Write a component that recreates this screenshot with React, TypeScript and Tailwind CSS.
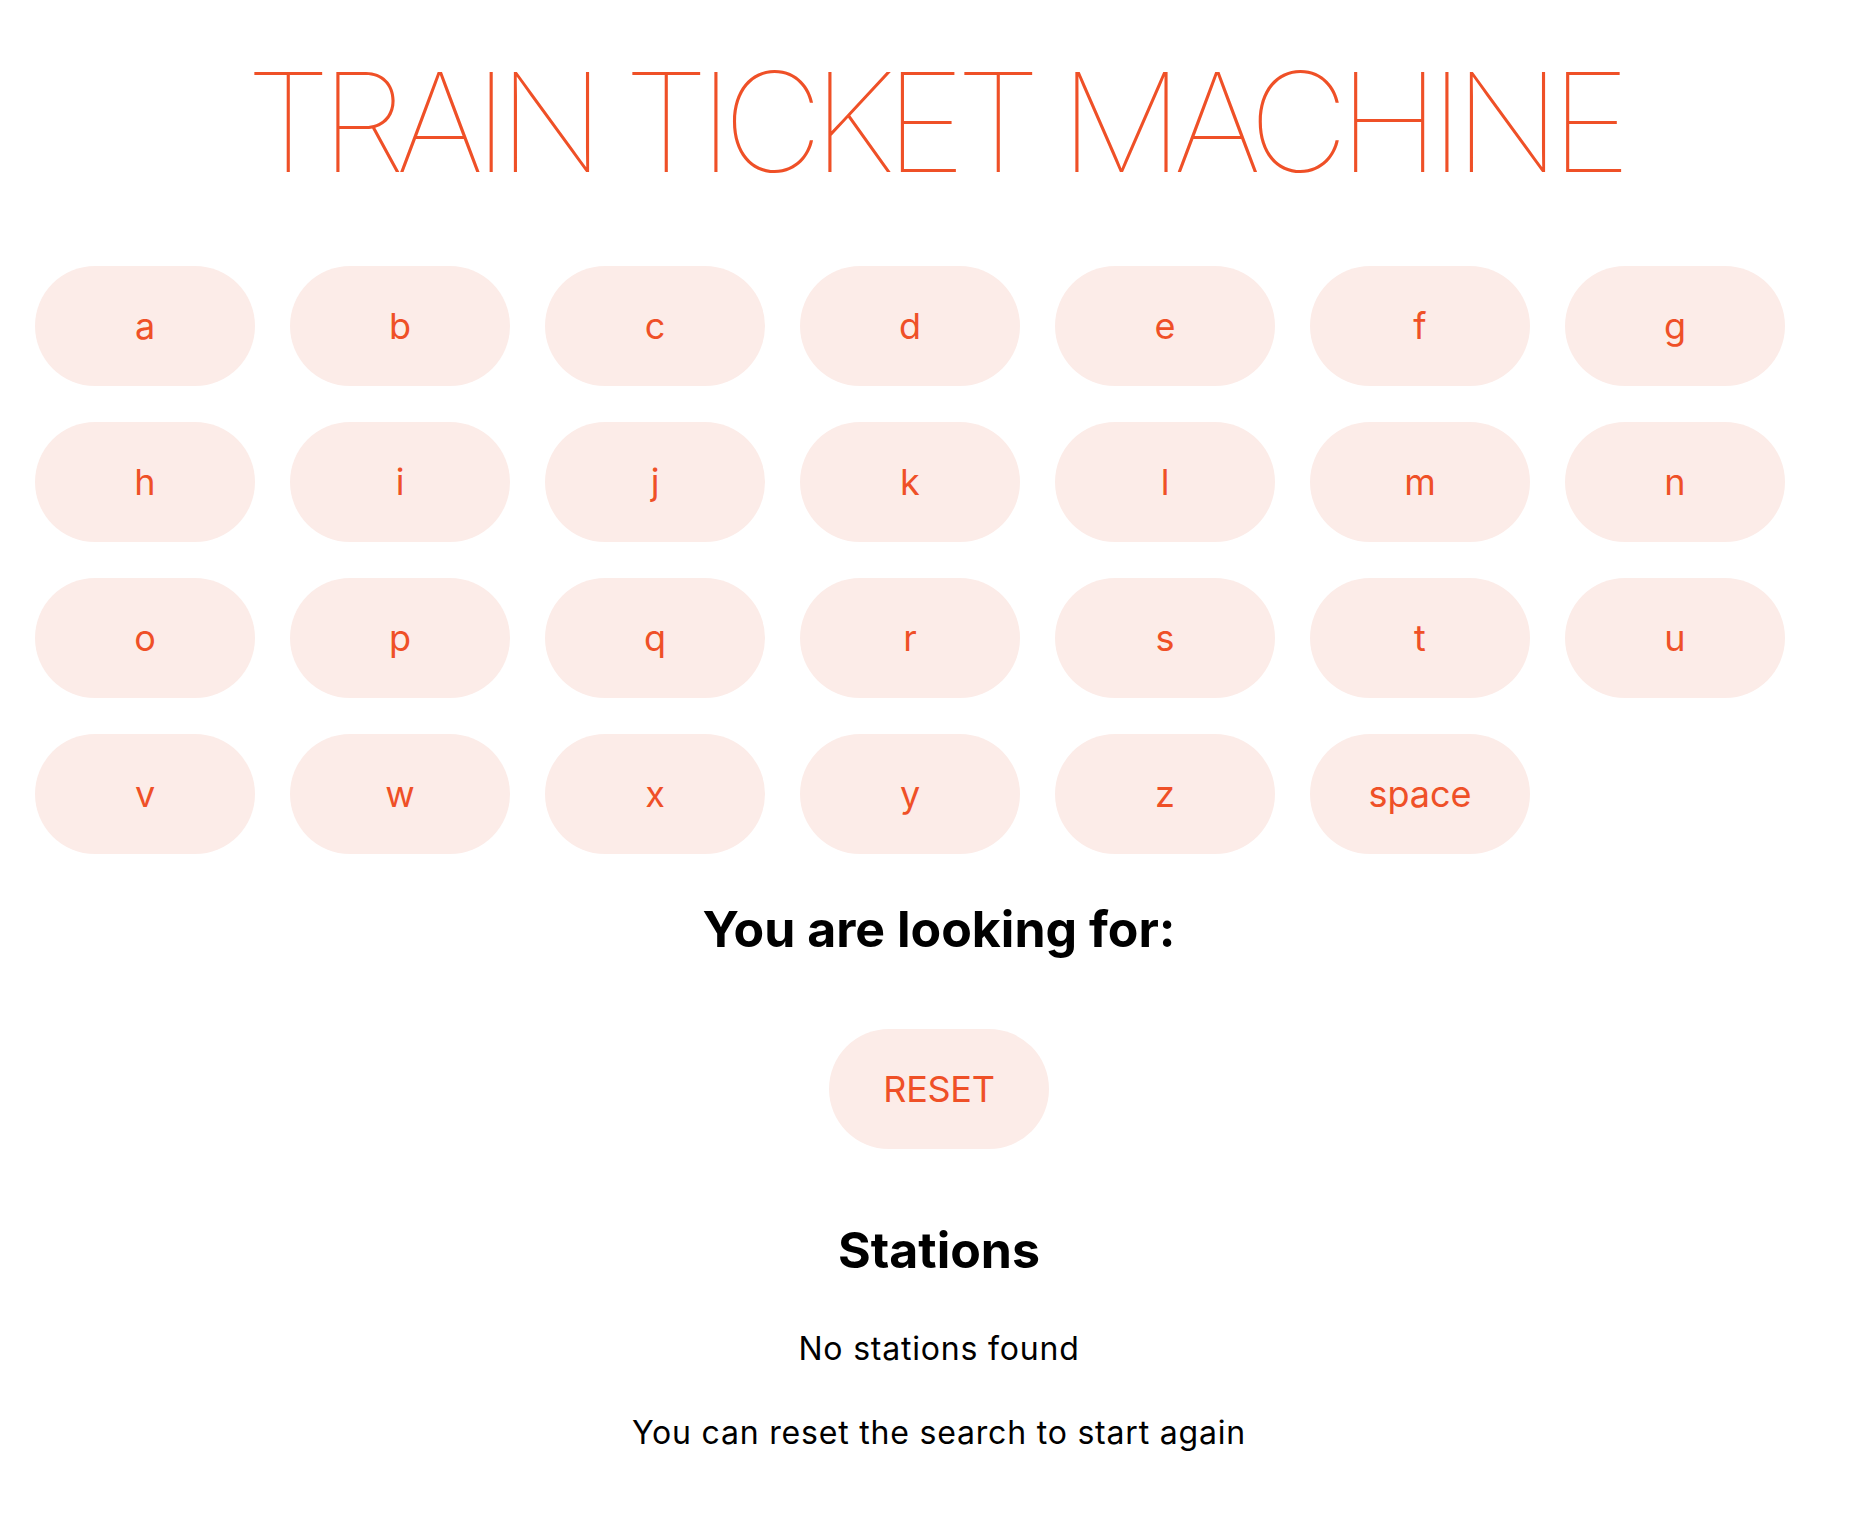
import React from "react";

const letters = "abcdefghijklmnopqrstuvwxyz".split("").concat(["space"]);

export default function App() {
  return (
    <div className="min-h-[1534px] w-full bg-white text-black [font-family:Inter,'Noto_Sans',sans-serif]">
      <h1 className="pt-[52px] pl-[5px] text-center text-[138px] font-thin leading-[140px] text-[#ef5027] tracking-[-10px]">
        TRAIN TICKET MACHINE
      </h1>
      <div className="mt-[74px] flex flex-wrap gap-x-[35px] gap-y-[36px] pl-[35px]">
        {letters.map((l) => (
          <button
            key={l}
            className="flex h-[120px] w-[220px] items-center justify-center rounded-full bg-[#fcece8] text-[36px] text-[#ef5027]"
          >
            {l}
          </button>
        ))}
      </div>
      <div className="flex flex-col items-center pl-[16px]">
        <h2 className="mt-[45px] text-[50px] font-bold leading-[60px]">You are looking for:</h2>
        <button className="mt-[70px] flex h-[120px] w-[220px] items-center justify-center rounded-full bg-[#fcece8] text-[36px] tracking-[-0.3px] text-[#ef5027]">
          RESET
        </button>
        <h2 className="mt-[71px] text-[50px] font-bold leading-[60px]">Stations</h2>
        <p className="mt-[49px] text-[32px] leading-[40px] tracking-[0.8px]">No stations found</p>
        <p className="mt-[44px] text-[32px] leading-[40px] tracking-[0.8px]">You can reset the search to start again</p>
      </div>
    </div>
  );
}
